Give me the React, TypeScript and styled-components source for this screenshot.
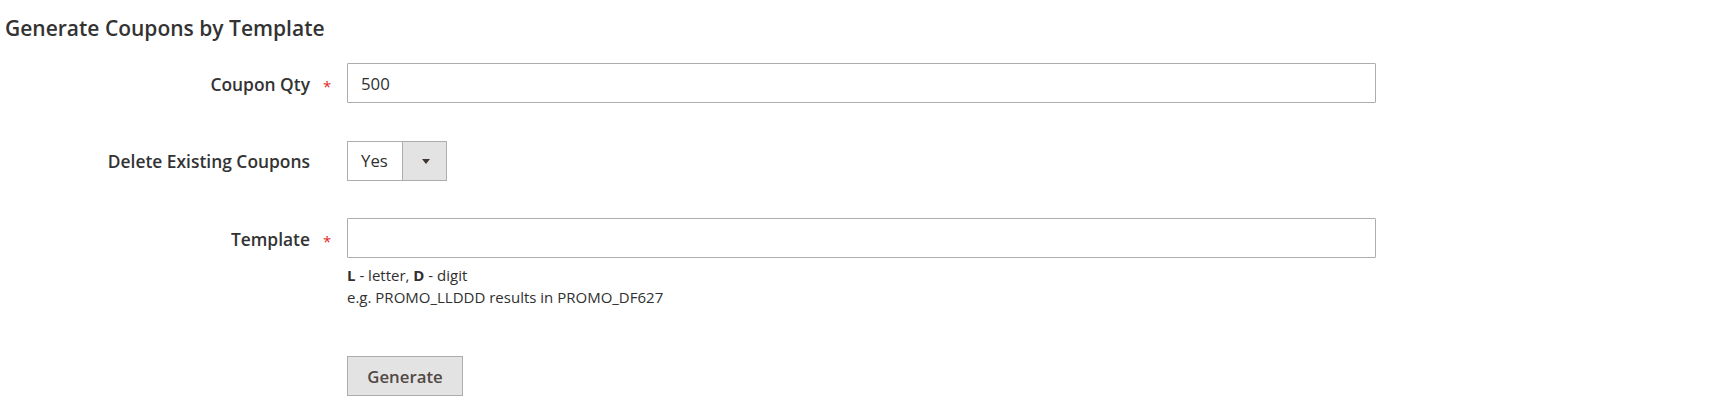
import styled, { createGlobalStyle } from 'styled-components'

const GlobalStyle = createGlobalStyle`
    body {
        margin: 0;
        background: #ffffff;
        font-family: "Open Sans", "Liberation Sans", sans-serif;
        color: #303030;
    }
`

export const Page = styled.div`
    width: 1730px;
    height: 403px;
    overflow: hidden;
`

export const Legend = styled.h2`
    margin: 16px 0 0 5px;
    font-size: 21px;
    line-height: 24px;
    font-weight: 600;
    color: #333333;
`

export const Fieldset = styled.div`
    display: flex;
    flex-direction: column;
    padding-top: 23px;
`

export const Row = styled.div<{ $gap?: number }>`
    display: flex;
    align-items: flex-start;
    margin-bottom: ${(p) => p.$gap ?? 38}px;
`

export const Label = styled.label<{ $shift?: number }>`
    width: 310px;
    text-align: right;
    font-size: 17.4px;
    font-weight: 600;
    line-height: 23px;
    padding-top: ${(p) => 10 + (p.$shift ?? 0)}px;
    color: #333333;
    flex-shrink: 0;
`

export const Required = styled.span<{ $on?: boolean }>`
    width: 37px;
    flex-shrink: 0;
    padding-left: 13px;
    box-sizing: border-box;
    padding-top: 12px;
    font-size: 15px;
    line-height: 23px;
    color: #e22626;
    visibility: ${(p) => (p.$on ? 'visible' : 'hidden')};
`

export const Control = styled.div`
    display: flex;
    flex-direction: column;
`

export const TextInput = styled.input`
    width: 1029px;
    height: 40px;
    box-sizing: border-box;
    border: 1px solid #adadad;
    border-radius: 1px;
    padding: 0 13px;
    font-family: "Open Sans", "Liberation Sans", sans-serif;
    font-size: 16.8px;
    color: #303030;
    background: #ffffff;
    outline: none;
`

export const SelectBox = styled.div`
    display: flex;
    width: 100px;
    height: 40px;
    box-sizing: border-box;
    border: 1px solid #adadad;
    background: #ffffff;
`

export const SelectValue = styled.span`
    flex: 1;
    padding-left: 13px;
    font-size: 16.8px;
    line-height: 38px;
    color: #303030;
`

export const SelectArrow = styled.span`
    width: 43px;
    display: flex;
    align-items: center;
    justify-content: center;
    background: #e3e3e3;
    border-left: 1px solid #adadad;

    &::after {
        content: '';
        margin-left: 3px;
        border-left: 4.5px solid transparent;
        border-right: 4.5px solid transparent;
        border-top: 5px solid #41362f;
    }
`

export const Note = styled.div`
    margin-top: 7px;
    font-size: 15px;
    line-height: 21.6px;
    color: #303030;

    b {
        font-weight: 700;
    }
`

export const Button = styled.button`
    width: 116px;
    height: 40px;
    margin-left: 347px;
    border: 1px solid #adadad;
    border-radius: 0;
    background: #e3e3e3;
    color: #514943;
    font-family: "Open Sans", "Liberation Sans", sans-serif;
    font-size: 16.8px;
    font-weight: 600;
    padding: 0;
    cursor: pointer;
`

const App = () => {
    return (
        <Page>
            <GlobalStyle />
            <Legend>Generate Coupons by Template</Legend>
            <Fieldset>
                <Row>
                    <Label $shift={0}>Coupon Qty</Label>
                    <Required $on>*</Required>
                    <Control>
                        <TextInput defaultValue="500" />
                    </Control>
                </Row>
                <Row $gap={37}>
                    <Label $shift={-1}>Delete Existing Coupons</Label>
                    <Required>*</Required>
                    <Control>
                        <SelectBox>
                            <SelectValue>Yes</SelectValue>
                            <SelectArrow />
                        </SelectBox>
                    </Control>
                </Row>
                <Row $gap={48}>
                    <Label $shift={0}>Template</Label>
                    <Required $on>*</Required>
                    <Control>
                        <TextInput defaultValue="" />
                        <Note>
                            <b>L</b> - letter, <b>D</b> - digit
                            <br />
                            e.g. PROMO_LLDDD results in PROMO_DF627
                        </Note>
                    </Control>
                </Row>
                <Button>Generate</Button>
            </Fieldset>
        </Page>
    )
}

export default App
